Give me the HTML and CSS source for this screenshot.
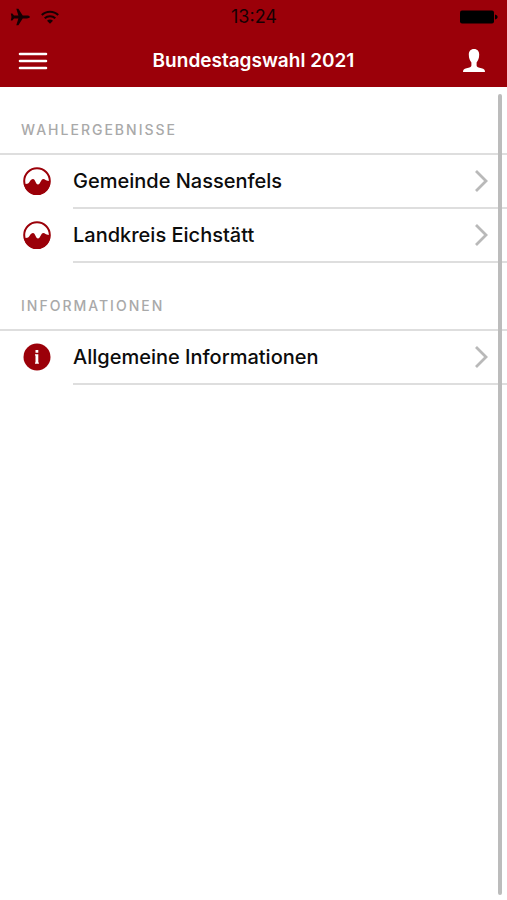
FILE: index.html
```html
<!DOCTYPE html>
<html lang="de">
<head>
<meta charset="utf-8">
<meta name="viewport" content="width=device-width, initial-scale=1">
<title>Bundestagswahl 2021</title>
<link rel="stylesheet" href="styles.css">
</head>
<body>
<svg class="defs" aria-hidden="true">
  <symbol id="wave" viewBox="0 0 28 28">
    <circle cx="14" cy="14" r="12.800" fill="#fff" stroke="currentColor" stroke-width="2"/>
    <path fill="currentColor" d="M1 16.800C4 17.600 5.500 16.500 6.600 14.800C7.800 12.900 8.600 12 10 12C12.200 12 12.800 17.600 15 17.600C17.200 17.600 18 12 20.300 12C22.300 12 22.800 14.400 27 13.800A13 13 0 0 1 1 16.800Z"/>
  </symbol>
  <symbol id="chevron" viewBox="0 0 14 24">
    <path d="M2 2L12 12L2 22" fill="none" stroke="currentColor" stroke-width="2.800"/>
  </symbol>
</svg>
<header class="header">
  <div class="status">
    <div class="signals">
      <svg class="plane" viewBox="0 0 20 18" aria-hidden="true"><path d="M19.800 9C19.800 8 18.300 7.600 17 7.600H12.700L8.400 .8H6.300L8.400 7.600H4L2.400 5.600H.8L1.500 9L.8 12.400H2.400L4 10.400H8.400L6.300 17.200H8.400L12.700 10.400H17C18.300 10.400 19.800 10 19.800 9Z"/></svg>
      <svg class="wifi" viewBox="0 0 20 14" aria-hidden="true"><g fill="none" stroke="currentColor" stroke-width="2"><path d="M1.800 5C6.200 .6 13.800 .6 18.200 5"/><path d="M4.700 8.300C7.600 5.400 12.400 5.400 15.300 8.300"/></g><path d="M7 10.800C8.700 9.200 11.300 9.200 13 10.800L10 13.700Z"/></svg>
    </div>
    <time class="clock">13:24</time>
    <svg class="battery" viewBox="0 0 38 14" aria-hidden="true"><rect width="34" height="13" y=".5" rx="2"/><path d="M35 4.500C38.500 5.500 38.500 8.500 35 9.500Z"/></svg>
  </div>
  <div class="nav">
    <button class="icon-button" type="button" aria-label="Menü">
      <svg class="menu" viewBox="0 0 30 20" aria-hidden="true"><path d="M2 3H28M2 10H28M2 17H28" fill="none" stroke="currentColor" stroke-width="2.600" stroke-linecap="round"/></svg>
    </button>
    <h1 class="title">Bundestagswahl 2021</h1>
    <button class="icon-button end" type="button" aria-label="Profil">
      <svg class="person" viewBox="0 0 22 23" aria-hidden="true"><path d="M11 0C7.500 0 5.800 2.300 5.800 5.600C5.800 9.500 7 12 8.400 13.500V16.500C8.400 18 6.500 18.500 3.500 19.200C1 19.800 0 20.800 0 23H22C22 20.800 21 19.800 18.500 19.200C15.500 18.500 13.600 18 13.600 16.500V13.500C15 12 16.200 9.500 16.200 5.600C16.200 2.300 14.500 0 11 0Z"/></svg>
    </button>
  </div>
</header>
<main class="content">
  <section>
    <h2 class="heading">WAHLERGEBNISSE</h2>
    <ul class="list">
      <li><a class="row" href="#nassenfels"><svg class="icon" aria-hidden="true"><use href="#wave"/></svg><span class="label">Gemeinde Nassenfels<svg class="chevron" aria-hidden="true"><use href="#chevron"/></svg></span></a></li>
      <li><a class="row" href="#eichstaett"><svg class="icon" aria-hidden="true"><use href="#wave"/></svg><span class="label">Landkreis Eichstätt<svg class="chevron" aria-hidden="true"><use href="#chevron"/></svg></span></a></li>
    </ul>
  </section>
  <section>
    <h2 class="heading">INFORMATIONEN</h2>
    <ul class="list">
      <li><a class="row" href="#informationen"><svg class="icon" viewBox="0 0 28 28" aria-hidden="true"><circle cx="14" cy="14" r="13.500" fill="currentColor"/><path fill="#fff" d="M12.500 7H15.300V9.800H12.500ZM12 11.200H15.300V19.600H15.900V20.800H12V19.600H12.500V12.400H12Z"/></svg><span class="label">Allgemeine Informationen<svg class="chevron" aria-hidden="true"><use href="#chevron"/></svg></span></a></li>
    </ul>
  </section>
  <div class="scrollbar" aria-hidden="true"></div>
</main>
</body>
</html>
```
FILE: styles.css
```css
* {
  box-sizing: border-box;
}

body {
  margin: 0;
  min-height: 100vh;
  display: flex;
  flex-direction: column;
  background: #fff;
  color: #0c0c0c;
  font-family: Inter, "Liberation Sans", sans-serif;
}

svg {
  display: block;
  fill: currentColor;
}

.defs {
  position: absolute;
  width: 0;
  height: 0;
}

.header {
  background: #9b0009;
}

.status,
.nav {
  display: grid;
  grid-template-columns: 1fr auto 1fr;
  align-items: center;
}

.status {
  height: 34px;
  padding: 0 9px 0 10px;
  color: #160003;
}

.signals {
  display: flex;
  align-items: center;
  gap: 10px;
}

.plane {
  width: 20px;
  height: 18px;
}

.wifi {
  width: 20px;
  height: 14px;
}

.clock {
  font-size: 18px;
  line-height: 22px;
}

.battery {
  width: 38px;
  height: 14px;
  color: #000;
  justify-self: end;
}

.nav {
  height: 53px;
  padding: 0 18px;
  color: #fff;
}

.icon-button {
  display: flex;
  justify-content: center;
  width: 30px;
  padding: 0;
  border: 0;
  background: none;
  color: inherit;
}

.icon-button.end {
  justify-self: end;
}

.menu {
  width: 30px;
  height: 20px;
}

.person {
  width: 22px;
  height: 23px;
}

.title {
  margin: 0;
  font-size: 19px;
  line-height: 24px;
  font-weight: 600;
}

.content {
  position: relative;
  flex: 1;
}

.heading {
  margin: 0;
  padding: 34px 21px 14px;
  border-bottom: 2px solid #dedede;
  color: #a9a9a9;
  font-size: 14px;
  line-height: 18px;
  font-weight: 500;
  letter-spacing: 2px;
}

.list {
  margin: 0;
  padding: 0;
  list-style: none;
}

.row {
  display: flex;
  align-items: center;
  gap: 22px;
  padding-left: 23px;
  color: inherit;
  text-decoration: none;
}

.icon {
  width: 28px;
  height: 28px;
  margin-bottom: 2px;
  color: #9b0009;
}

.label {
  flex: 1;
  display: flex;
  align-items: center;
  justify-content: space-between;
  height: 54px;
  padding-right: 19px;
  border-bottom: 2px solid #dedede;
  font-size: 20px;
  line-height: 24px;
  font-weight: 500;
}

.chevron {
  width: 14px;
  height: 24px;
  color: #b9b9b9;
}

.scrollbar {
  position: absolute;
  top: 7px;
  right: 5px;
  bottom: 5px;
  width: 4px;
  border-radius: 2px;
  background: #bcbcbc;
}
```
